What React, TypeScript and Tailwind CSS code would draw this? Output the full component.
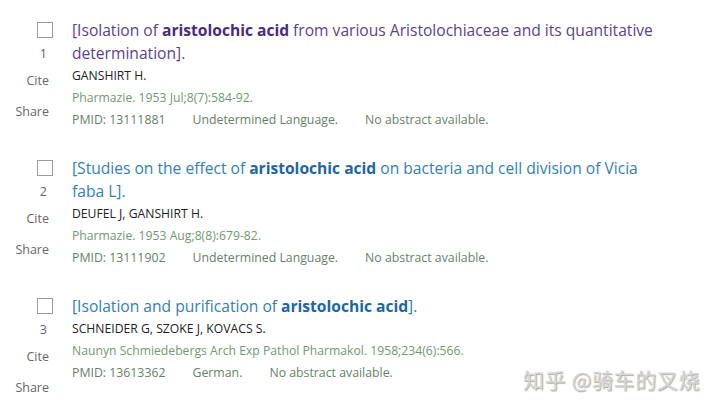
import React from 'react';

interface Citation {
  num: number;
  before: string;
  bold: string;
  after: string;
  visited: boolean;
  authors: string;
  journal: string;
  pmid: string;
  lang: string;
}

const items: Citation[] = [
  {
    num: 1,
    before: '[Isolation of ',
    bold: 'aristolochic acid',
    after: ' from various Aristolochiaceae and its quantitative determination].',
    visited: true,
    authors: 'GANSHIRT H.',
    journal: 'Pharmazie. 1953 Jul;8(7):584-92.',
    pmid: '13111881',
    lang: 'Undetermined Language.',
  },
  {
    num: 2,
    before: '[Studies on the effect of ',
    bold: 'aristolochic acid',
    after: ' on bacteria and cell division of Vicia faba L].',
    visited: false,
    authors: 'DEUFEL J, GANSHIRT H.',
    journal: 'Pharmazie. 1953 Aug;8(8):679-82.',
    pmid: '13111902',
    lang: 'Undetermined Language.',
  },
  {
    num: 3,
    before: '[Isolation and purification of ',
    bold: 'aristolochic acid',
    after: '].',
    visited: false,
    authors: 'SCHNEIDER G, SZOKE J, KOVACS S.',
    journal: 'Naunyn Schmiedebergs Arch Exp Pathol Pharmakol. 1958;234(6):566.',
    pmid: '13613362',
    lang: 'German.',
  },
];

const Row: React.FC<{ c: Citation }> = ({ c }) => (
  <div className="flex h-[138px]">
    <div className="w-[56px] shrink-0 flex flex-col items-end text-[12.5px] text-[#666]">
      <div className="mt-[3px] mr-[3px] w-4 h-4 border border-[#9a9a9a] bg-white" />
      <div className="mt-[5px] mr-[9px] h-[22px] leading-[22px]">{c.num}</div>
      <div className="mt-[5px] mr-[7px] h-[22px] leading-[22px]">Cite</div>
      <div className="mt-[9px] mr-[7px] h-[22px] leading-[22px]">Share</div>
    </div>
    <div className="ml-[16px] w-[600px]">
      <div
        className={`text-[15.6px] leading-[23px] ${c.visited ? 'text-[#5b3f93]' : 'text-[#2f7fba]'}`}
      >
        {c.before}
        <b className={`font-bold ${c.visited ? 'text-[#4a2a82]' : 'text-[#1c66a3]'}`}>{c.bold}</b>
        {c.after}
      </div>
      <div className="h-[21px] leading-[22px] text-[12.2px] text-[#222]">{c.authors}</div>
      <div className="h-[22px] leading-[23px] text-[12.2px] text-[#729872]">{c.journal}</div>
      <div className="h-[22px] leading-[23px] text-[12.3px] text-[#677f67] flex gap-[27px]">
        <span>PMID: {c.pmid}</span>
        <span>{c.lang}</span>
        <span>No abstract available.</span>
      </div>
    </div>
  </div>
);

export default function App() {
  return (
    <div
      className="relative w-[720px] h-[407px] overflow-hidden bg-white pt-[19px]"
      style={{ fontFamily: '"Open Sans", "Noto Sans", sans-serif' }}
    >
      {items.map((c) => (
        <Row key={c.num} c={c} />
      ))}
      <div
        className="absolute right-[20px] bottom-[17px] text-[21px] leading-none tracking-[0.6px] text-[#d6d6d6] [text-shadow:1px_1px_1px_#ababab]"
        style={{ fontFamily: '"Noto Sans CJK SC", "Noto Sans", sans-serif' }}
      >
        知乎 @骑车的叉烧
      </div>
    </div>
  );
}
